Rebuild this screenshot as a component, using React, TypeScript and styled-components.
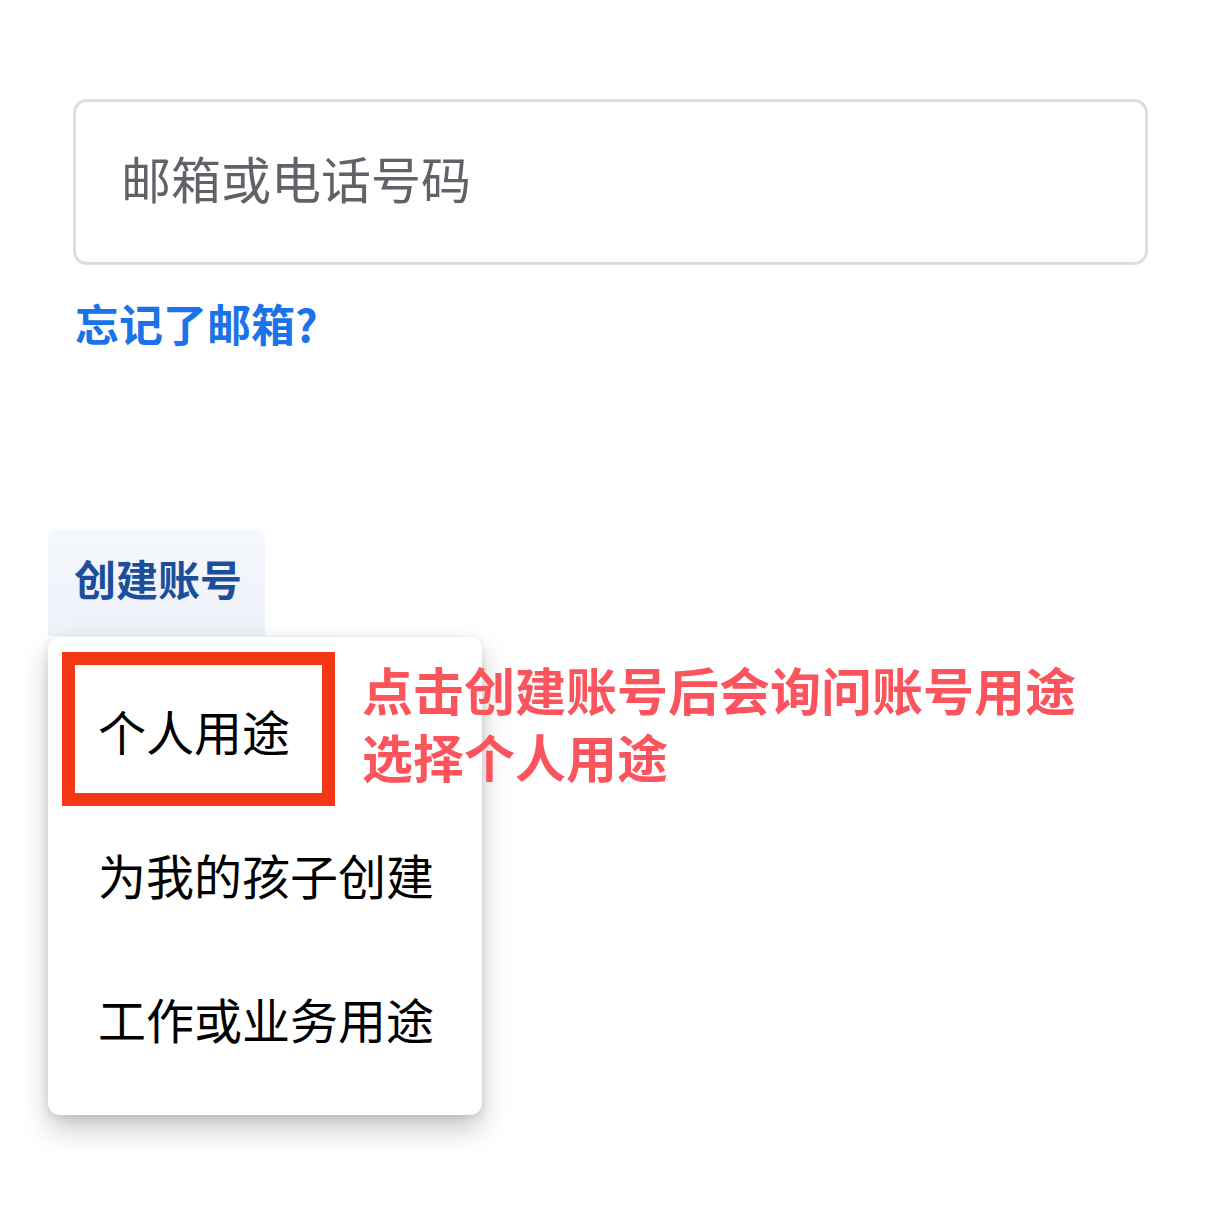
import React from "react";
import styled, { createGlobalStyle } from "styled-components";

const Global = createGlobalStyle`
  html, body { margin: 0; padding: 0; background: #ffffff; }
  body { font-family: "Noto Sans CJK SC", "Noto Sans", sans-serif; }
`;

const Page = styled.div`
  width: 1220px;
  height: 1220px;
  background: #ffffff;
  display: flex;
  flex-direction: column;
  padding-top: 99px;
  box-sizing: border-box;
`;

const Form = styled.div`
  display: flex;
  flex-direction: column;
  padding: 0 72px 0 73px;
`;

const InputBox = styled.div`
  height: 166px;
  box-sizing: border-box;
  border: 3px solid #dcdde0;
  border-radius: 14px;
  display: flex;
  align-items: center;
  padding-left: 45px;
  padding-bottom: 10px;
`;

const Placeholder = styled.span`
  font-size: 50px;
  color: #5f6368;
  line-height: 1;
`;

const ForgotLink = styled.a`
  display: block;
  margin-top: 33px;
  margin-left: 2px;
  font-size: 44px;
  line-height: 50px;
  font-weight: 700;
  color: #1a73e8;
  text-decoration: none;
`;

const Lower = styled.div`
  position: relative;
  margin-top: 181px;
  padding-left: 48px;
  display: flex;
  flex-direction: column;
  align-items: flex-start;
`;

const CreateButton = styled.div`
  width: 217px;
  height: 107px;
  box-sizing: border-box;
  padding-left: 26px;
  padding-bottom: 9px;
  display: flex;
  align-items: center;
  border-radius: 10px 10px 0 0;
  background: linear-gradient(180deg, #f5f8fd 0%, #edf1f8 100%);
  color: #1b4f9c;
  font-size: 42px;
  font-weight: 700;
  line-height: 1;
`;

const Menu = styled.div`
  width: 434px;
  box-sizing: border-box;
  margin-top: 1px;
  padding: 15px 0 21px 14px;
  background: #ffffff;
  border-radius: 12px;
  box-shadow: 0 14px 28px rgba(0, 0, 0, 0.22), 0 2px 8px rgba(0, 0, 0, 0.1);
  display: flex;
  flex-direction: column;
  align-items: flex-start;
`;

const MenuItem = styled.div<{ $highlight?: boolean }>`
  box-sizing: border-box;
  width: ${(p) => (p.$highlight ? "273px" : "420px")};
  height: ${(p) => (p.$highlight ? "154px" : "144px")};
  display: flex;
  align-items: center;
  padding-left: ${(p) => (p.$highlight ? "23px" : "36px")};
  padding-top: ${(p) => (p.$highlight ? "1px" : "0")};
  padding-bottom: ${(p) => (p.$highlight ? "0" : "8px")};
  border: ${(p) => (p.$highlight ? "13px solid #f43714" : "none")};
  font-size: 48px;
  line-height: 1;
  color: #000000;
`;

const Note = styled.div`
  position: absolute;
  left: 362px;
  top: 127px;
  font-size: 51px;
  line-height: 67px;
  font-weight: 700;
  color: #fb545c;
`;

export default function App() {
  return (
    <>
      <Global />
      <Page>
        <Form>
          <InputBox>
            <Placeholder>邮箱或电话号码</Placeholder>
          </InputBox>
          <ForgotLink>忘记了邮箱?</ForgotLink>
        </Form>
        <Lower>
          <CreateButton>创建账号</CreateButton>
          <Menu>
            <MenuItem $highlight>个人用途</MenuItem>
            <MenuItem>为我的孩子创建</MenuItem>
            <MenuItem>工作或业务用途</MenuItem>
          </Menu>
          <Note>
            点击创建账号后会询问账号用途
            <br />
            选择个人用途
          </Note>
        </Lower>
      </Page>
    </>
  );
}
